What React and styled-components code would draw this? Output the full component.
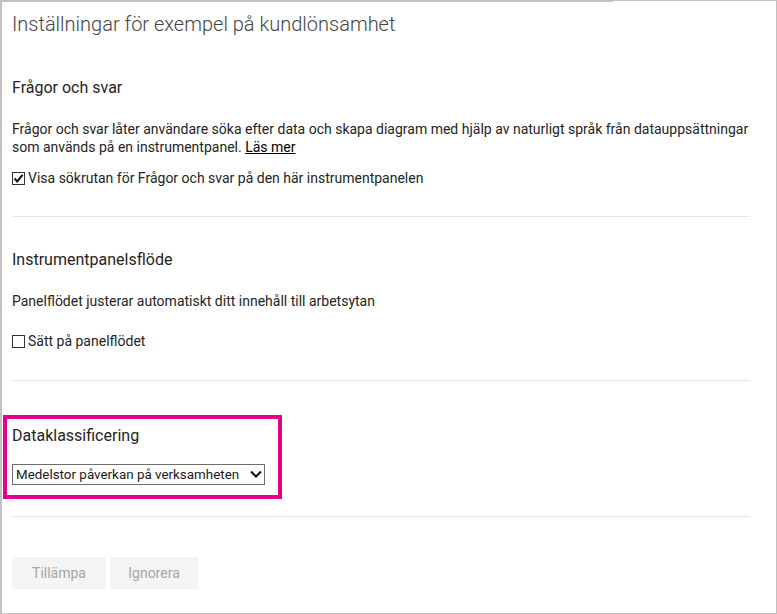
import React from "react";
import styled, { createGlobalStyle } from "styled-components";

const Global = createGlobalStyle`
  html, body { margin: 0; padding: 0; background: #fff; }
  body { font-family: Roboto, "Noto Sans", Arial, sans-serif; }
`;

const Frame = styled.div`
  position: relative;
  box-sizing: border-box;
  width: 777px;
  height: 614px;
  border: 1px solid #c2c2c2;
  border-left-width: 2px;
  padding: 0 26px 0 10px;
  background: #fff;
  &::before {
    content: "";
    position: absolute;
    top: -1px;
    left: -2px;
    width: 613px;
    height: 2px;
    background: #c2c2c2;
  }
`;

const Title = styled.h1`
  margin: 9px 0 0;
  font-size: 20px;
  line-height: 28px;
  font-weight: 300;
  color: #444;
`;

const Heading = styled.h2`
  margin: ${(p) => p.$top}px 0 0;
  font-size: 16px;
  line-height: 22px;
  font-weight: 400;
  color: #252423;
`;

const Para = styled.p`
  margin: ${(p) => p.$top}px 0 0;
  font-size: 14px;
  line-height: 18px;
  color: #252423;
`;

const Link = styled.a`
  color: #000;
  text-decoration: underline;
  cursor: pointer;
`;

const CheckRow = styled.label`
  display: flex;
  align-items: center;
  gap: 3px;
  margin-top: ${(p) => p.$top}px;
  height: 18px;
  font-size: 14px;
  color: #252423;
`;

const Box = styled.span`
  box-sizing: border-box;
  width: 13px;
  height: 13px;
  border: 1px solid #333;
  display: inline-flex;
  align-items: center;
  justify-content: center;
  background: #fff;
  flex-shrink: 0;
`;

const Divider = styled.hr`
  margin: ${(p) => p.$top}px 0 0;
  border: 0;
  height: 1px;
  background: #e6e6e6;
`;

const Highlight = styled.div`
  box-sizing: border-box;
  width: 279px;
  margin: ${(p) => p.$top}px 0 0 -9px;
  border: 4px solid #e3008c;
  padding: 6px 13px 10px 5px;
`;

const SelectBox = styled.div`
  box-sizing: border-box;
  display: flex;
  align-items: center;
  justify-content: space-between;
  gap: 4px;
  margin-top: 17px;
  height: 21px;
  padding: 0 2px 0 3px;
  border: 1px solid #6e6e6e;
  font-size: 13.4px;
  white-space: nowrap;
  color: #1a1a1a;
  svg { flex-shrink: 0; }
`;

const Actions = styled.div`
  display: flex;
  gap: 4px;
  margin-top: 40px;
`;

const Button = styled.button`
  box-sizing: border-box;
  width: ${(p) => p.$w}px;
  height: 32px;
  border: 0;
  background: #f4f4f4;
  color: #a6a6a6;
  font-family: inherit;
  font-size: 14px;
  padding: 0;
`;

const Check = ({ checked }) => (
  <Box>
    {checked && (
      <svg width="11" height="11" viewBox="0 0 11 11">
        <path d="M1.5 5.5 L4.2 8.4 L9.6 1.8" fill="none" stroke="#111" strokeWidth="2" />
      </svg>
    )}
  </Box>
);

export default function App() {
  return (
    <>
      <Global />
      <Frame>
        <Title>Inställningar för exempel på kundlönsamhet</Title>

        <Heading $top={39}>Frågor och svar</Heading>
        <Para $top={21}>
          Frågor och svar låter användare söka efter data och skapa diagram med hjälp av naturligt språk från datauppsättningar
          som används på en instrumentpanel. <Link>Läs mer</Link>
        </Para>
        <CheckRow $top={13}>
          <Check checked />
          Visa sökrutan för Frågor och svar på den här instrumentpanelen
        </CheckRow>
        <Divider $top={29} />

        <Heading $top={32}>Instrumentpanelsflöde</Heading>
        <Para $top={21}>Panelflödet justerar automatiskt ditt innehåll till arbetsytan</Para>
        <CheckRow $top={22}>
          <Check />
          Sätt på panelflödet
        </CheckRow>
        <Divider $top={30} />

        <Highlight $top={34}>
          <Heading $top={0}>Dataklassificering</Heading>
          <SelectBox>
            <span>Medelstor påverkan på verksamheten</span>
            <svg width="12" height="9" viewBox="0 0 12 9">
              <path d="M1 1.5 L6 6.5 L11 1.5" fill="none" stroke="#111" strokeWidth="2" />
            </svg>
          </SelectBox>
        </Highlight>
        <Divider $top={17} />

        <Actions>
          <Button $w={94}>Tillämpa</Button>
          <Button $w={88}>Ignorera</Button>
        </Actions>
      </Frame>
    </>
  );
}
